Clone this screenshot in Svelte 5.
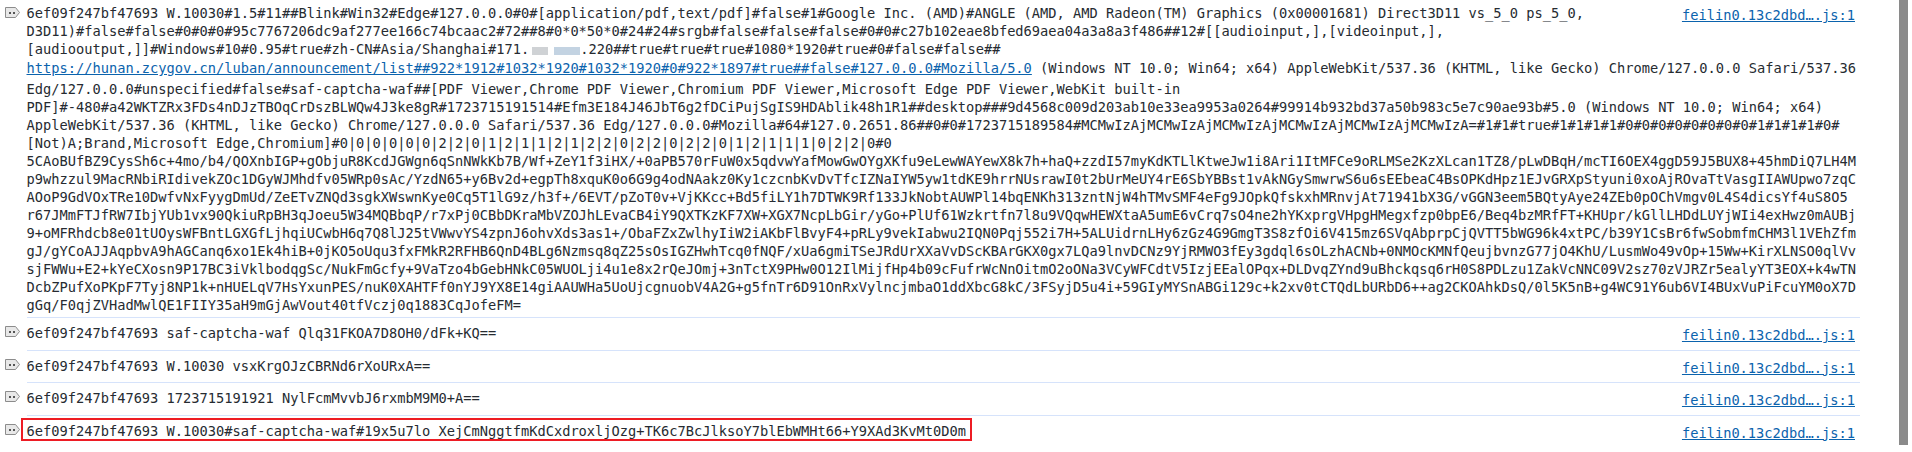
<script>
  const prefix = '6ef09f247bf47693';
  const source = 'feilin0.13c2dbd….js:1';
  const head = [
    prefix + ' W.10030#1.5#11##Blink#Win32#Edge#127.0.0.0#0#[application/pdf,text/pdf]#false#1#Google Inc. (AMD)#ANGLE (AMD, AMD Radeon(TM) Graphics (0x00001681) Direct3D11 vs_5_0 ps_5_0,',
    'D3D11)#false#false#0#0#0#95c7767206dc9af277ee166c74bcaac2#72##8#0*0*50*0#24#24#srgb#false#false#false#0#0#c27b102eae8bfed69aea04a3a8a3f486##12#[[audioinput,],[videoinput,],'
  ];
  const tail = [
    'Edg/127.0.0.0#unspecified#false#saf-captcha-waf##[PDF Viewer,Chrome PDF Viewer,Chromium PDF Viewer,Microsoft Edge PDF Viewer,WebKit built-in',
    'PDF]#-480#a42WKTZRx3FDs4nDJzTBOqCrDszBLWQw4J3ke8gR#1723715191514#Efm3E184J46JbT6g2fDCiPujSgIS9HDAblik48h1R1##desktop###9d4568c009d203ab10e33ea9953a0264#99914b932bd37a50b983c5e7c90ae93b#5.0 (Windows NT 10.0; Win64; x64)',
    'AppleWebKit/537.36 (KHTML, like Gecko) Chrome/127.0.0.0 Safari/537.36 Edg/127.0.0.0#Mozilla#64#127.0.2651.86##0#0#1723715189584#MCMwIzAjMCMwIzAjMCMwIzAjMCMwIzAjMCMwIzAjMCMwIzA=#1#1#true#1#1#1#1#0#0#0#0#0#0#0#0#1#1#1#1#0#',
    '[Not)A;Brand,Microsoft Edge,Chromium]#0|0|0|0|0|0|2|2|0|1|2|1|1|2|1|2|2|0|2|2|0|2|2|0|1|2|1|1|1|0|2|2|0#0',
    '5CAoBUfBZ9CysSh6c+4mo/b4/QOXnbIGP+gObjuR8KcdJGWgn6qSnNWkKb7B/Wf+ZeY1f3iHX/+0aPB570rFuW0x5qdvwYafMowGwOYgXKfu9eLewWAYewX8k7h+haQ+zzdI57myKdKTLlKtweJw1i8Ari1ItMFCe9oRLMSe2KzXLcan1TZ8/pLwDBqH/mcTI6OEX4ggD59J5BUX8+45hmDiQ7LH4M',
    'p9whzzul9MacRNbiRIdivekZOc1DGyWJMhdfv05WRp0sAc/YzdN65+y6Bv2d+egpTh8xquK0o6G9g4odNAakz0Ky1czcnbKvDvTfcIZNaIYW5yw1tdKE9hrrNUsrawI0t2bUrMeUY4rE6SbYBBst1vAkNGySmwrwS6u6sEEbeaC4BsOPKdHpz1EJvGRXpStyuni0xoAjROvaTtVasgIIAWUpwo7zqC',
    'AOoP9GdVOxTRe10DwfvNxFyygDmUd/ZeETvZNQd3sgkXWswnKye0Cq5T1lG9z/h3f+/6EVT/pZoT0v+VjKKcc+Bd5fiLY1h7DTWK9Rf133JkNobtAUWPl14bqENKh313zntNjW4hTMvSMF4eFg9JOpkQfskxhMRnvjAt71941bX3G/vGGN3eem5BQtyAye24ZEb0pOChVmgv0L4S4dicsYf4uS8O5',
    'r67JMmFTJfRW7IbjYUb1vx90QkiuRpBH3qJoeu5W34MQBbqP/r7xPj0CBbDKraMbVZOJhLEvaCB4iY9QXTKzKF7XW+XGX7NcpLbGir/yGo+PlUf61Wzkrtfn7l8u9VQqwHEWXtaA5umE6vCrq7sO4ne2hYKxprgVHpgHMegxfzp0bpE6/Beq4bzMRfFT+KHUpr/kGllLHDdLUYjWIi4exHwz0mAUBj',
    '9+oMFRhdcb8e01tUOysWFBntLGXGfLjhqiUCwbH6q7Q8lJ25tVWwvYS4zpnJ6ohvXds3as1+/ObaFZxZwlhyIiW2iAKbFlBvyF4+pRLy9vekIabwu2IQN0Pqj552i7H+5ALUidrnLHy6zGz4G9GmgT3S8zfOi6V415mz6SVqAbprpCjQVTT5bWG96k4xtPC/b39Y1CsBr6fwSobmfmCHM3l1VEhZfm',
    'gJ/gYCoAJJAqpbvA9hAGCanq6xo1Ek4hiB+0jKO5oUqu3fxFMkR2RFHB6QnD4BLg6Nzmsq8qZ25sOsIGZHwhTcq0fNQF/xUa6gmiTSeJRdUrXXaVvDScKBArGKX0gx7LQa9lnvDCNz9YjRMWO3fEy3gdql6sOLzhACNb+0NMOcKMNfQeujbvnzG77jO4KhU/LusmWo49vOp+15Ww+KirXLNSO0qlVv',
    'sjFWWu+E2+kYeCXosn9P17BC3iVklbodqgSc/NukFmGcfy+9VaTzo4bGebHNkC05WUOLji4u1e8x2rQeJOmj+3nTctX9PHw0O12IlMijfHp4b09cFufrWcNnOitmO2oONa3VCyWFCdtV5IzjEEalOPqx+DLDvqZYnd9uBhckqsq6rH0S8PDLzu1ZakVcNNC09V2sz70zVJRZr5ealyYT3EOX+k4wTN',
    'DcbZPufXoPKpF7Tyj8NP1k+nHUELqV7HsYxunPES/nuK0XAHTFf0nYJ9YX8E14giAAUWHa5UoUjcgnuobV4A2G+g5fnTr6D91OnRxVylncjmbaO1ddXbcG8kC/3FSyjD5u4i+59GIyMYSnABGi129c+k2xv0tCTQdLbURbD6++ag2CKOAhkDsQ/0l5K5nB+g4WC91Y6ub6VI4BUxVuPiFcuYM0oX7D',
    'gGq/F0qjZVHadMwlQE1FIIY35aH9mGjAwVout40tfVczj0q1883CqJofeFM='
  ];
  const rows = [
    prefix + ' saf-captcha-waf Qlq31FKOA7D8OH0/dFk+KQ==',
    prefix + ' W.10030 vsxKrgOJzCBRNd6rXoURxA==',
    prefix + ' 1723715191921 NylFcmMvvbJ6rxmbM9M0+A=='
  ];
  const boxed = prefix + ' W.10030#saf-captcha-waf#19x5u7lo XejCmNggtfmKdCxdroxljOzg+TK6c7BcJlksoY7blEbWMHt66+Y9XAd3KvMt0D0m';
</script>

{#snippet icon()}
  <svg class="icon" width="15" height="11" viewBox="0 0 15 11" aria-hidden="true">
    <path d="M.5.5H10.5L14.5 5.5 10.5 10.5H.5Z" fill="#e8e8e8" stroke="#8c8c8c" />
    <rect x="4" y="5" width="2" height="2" fill="#555" />
    <rect x="8" y="5" width="2" height="2" fill="#555" />
  </svg>
{/snippet}

<main class="console">
  <section class="msg first">
    {@render icon()}
    <div class="body">
      <a class="src" href="#top">{source}</a>
      {#each head as line}
        <div class="line">{line}</div>
      {/each}
      <div class="line">[audiooutput,]]#Windows#10#0.95#true#zh-CN#Asia/Shanghai#171.<span class="mosaic"><i></i><i></i></span>.220##true#true#true#1080*1920#true#0#false#false##</div>
      <div class="line tall"><a href="#top">https://hunan.zcygov.cn/luban/announcement/list##922*1912#1032*1920#1032*1920#0#922*1897#true##false#127.0.0.0#Mozilla/5.0</a> (Windows NT 10.0; Win64; x64) AppleWebKit/537.36 (KHTML, like Gecko) Chrome/127.0.0.0 Safari/537.36</div>
      {#each tail as line}
        <div class="line">{line}</div>
      {/each}
    </div>
  </section>

  {#each rows as row}
    <section class="msg">
      {@render icon()}
      <div class="body">
        <a class="src" href="#top">{source}</a>
        <div class="line">{row}</div>
      </div>
    </section>
  {/each}

  <section class="msg last">
    {@render icon()}
    <div class="body">
      <a class="src" href="#top">{source}</a>
      <div class="line"><span class="boxed">{boxed}</span></div>
    </div>
  </section>

  <div class="scrollbar"></div>
</main>

<style>
  :global(body) {
    margin: 0;
    background: #fff;
  }
  .console {
    position: relative;
    width: 1912px;
    height: 452px;
    box-sizing: border-box;
    padding-right: 52px;
    overflow: hidden;
    font-family: "DejaVu Sans Mono", "Liberation Mono", monospace;
    font-size: 13.703px;
    line-height: 18px;
    color: #262b31;
    background: #fff;
  }
  .msg {
    display: flex;
    height: 32.5px;
    box-sizing: border-box;
    padding-top: 6px;
    background: linear-gradient(#d6e3fb, #d6e3fb) 26.5px 100% / calc(100% - 26.5px) 1px no-repeat;
  }
  .msg.first {
    height: 318px;
    padding-top: 4px;
  }
  .msg.last {
    background: none;
  }
  .icon {
    flex: none;
    margin: 2px 6.5px 0 5px;
  }
  .first .icon {
    margin-top: 3px;
  }
  .body {
    flex: 1;
    min-width: 0;
  }
  .line {
    height: 18px;
    white-space: pre;
  }
  .line.tall {
    height: 22px;
    line-height: 20px;
  }
  a {
    color: #0b63ad;
    text-decoration: underline;
  }
  .src {
    float: right;
    margin: 2px 5px 0 0;
    height: 16px;
  }
  .mosaic {
    display: inline-flex;
    width: 6.2ch;
    height: 8px;
    gap: 6px;
    vertical-align: -1px;
    padding: 0 0 0 3px;
    box-sizing: border-box;
    filter: blur(.6px);
  }
  .mosaic i {
    display: block;
    flex: 16;
    background: #cfd2d5;
  }
  .mosaic i + i {
    background: #c3d3e2;
    flex: 26;
  }
  .boxed {
    position: relative;
    display: inline-block;
  }
  .boxed::after {
    content: "";
    position: absolute;
    inset: -4px -6.5px -1px -5.5px;
    border: 2px solid #ed1c24;
  }
  .scrollbar {
    position: absolute;
    top: 0;
    right: 4px;
    width: 9px;
    height: 445px;
    background: #8a8a8a;
  }
</style>
